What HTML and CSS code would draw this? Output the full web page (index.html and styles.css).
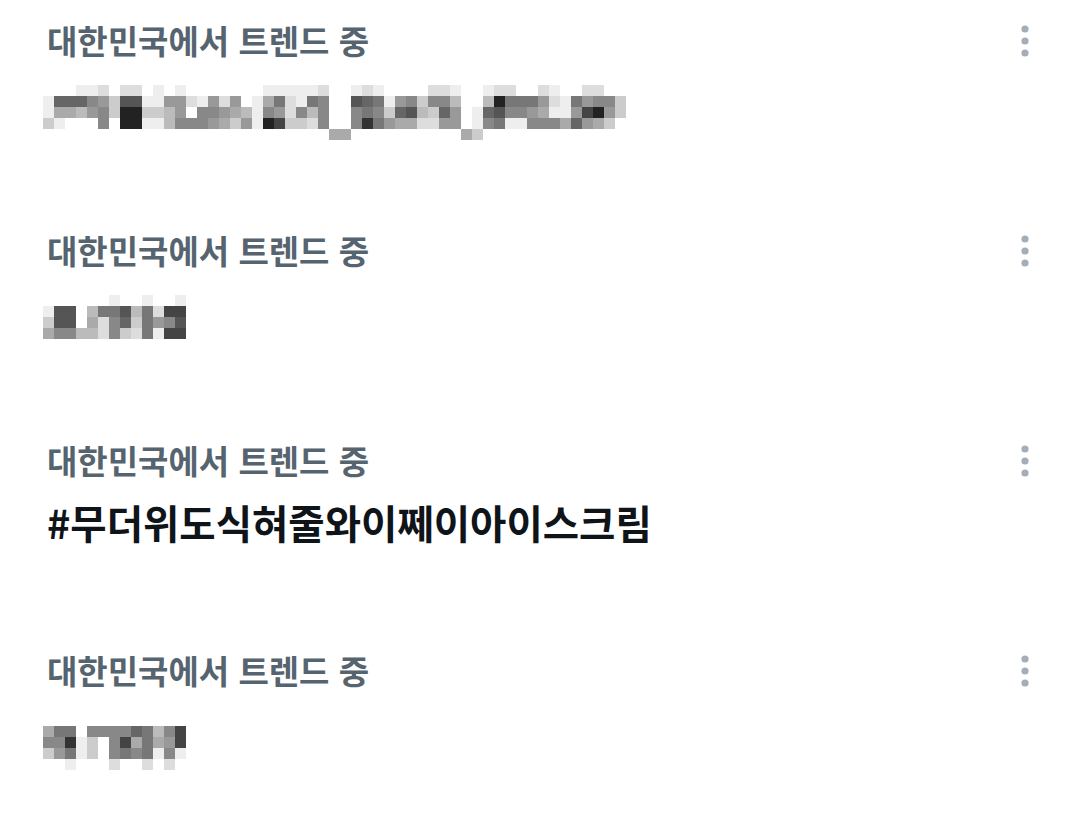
FILE: index.html
```html
<!DOCTYPE html>
<html lang="ko">
<head>
    <meta charset="UTF-8">
    <meta name="viewport" content="width=device-width, initial-scale=1.0">
    <title>트렌드</title>
    <link rel="stylesheet" href="styles.css">
</head>
<body>
    <ul class="trends">
        <li class="trend">
            <div class="trend-head">
                <span class="trend-meta">대한민국에서 트렌드 중</span>
                <button type="button" class="more" aria-label="더 보기">
                    <svg width="8" height="32" viewBox="0 0 8 32"><circle cx="4" cy="4" r="3.6"/><circle cx="4" cy="16" r="3.6"/><circle cx="4" cy="28" r="3.6"/></svg>
                </button>
            </div>
            <!-- hidden trend name, pixelated -->
            <div class="mosaic" data-rows="000eed0dd0e0e0000000eeeeed00ede0000dde00edd00de00dd00|e66689c55ee99de9d90ea7de7800567e98c88b00b27779de7988c|eaab98c22ccb90889abe89d8b800878c65bc690e65889aee9429c|ce0008022eeb8889ac9e24ccd8008379aadd990e87ee888a69ac0|00000000000000000000000000aa0000000000ac0000000000000"></div>
        </li>
        <li class="trend">
            <div class="trend-head">
                <span class="trend-meta">대한민국에서 트렌드 중</span>
                <button type="button" class="more" aria-label="더 보기">
                    <svg width="8" height="32" viewBox="0 0 8 32"><circle cx="4" cy="4" r="3.6"/><circle cx="4" cy="16" r="3.6"/><circle cx="4" cy="28" r="3.6"/></svg>
                </button>
            </div>
            <div class="mosaic" data-rows="000000e00e00e|e550b775b7d44|c550ad86c7985|a88bbd8cd7e44"></div>
        </li>
        <li class="trend">
            <div class="trend-head">
                <span class="trend-meta">대한민국에서 트렌드 중</span>
                <button type="button" class="more" aria-label="더 보기">
                    <svg width="8" height="32" viewBox="0 0 8 32"><circle cx="4" cy="4" r="3.6"/><circle cx="4" cy="16" r="3.6"/><circle cx="4" cy="28" r="3.6"/></svg>
                </button>
            </div>
            <p class="trend-name">#무더위도식혀줄와이쩨이아이스크림</p>
        </li>
        <li class="trend">
            <div class="trend-head">
                <span class="trend-meta">대한민국에서 트렌드 중</span>
                <button type="button" class="more" aria-label="더 보기">
                    <svg width="8" height="32" viewBox="0 0 8 32"><circle cx="4" cy="4" r="3.6"/><circle cx="4" cy="16" r="3.6"/><circle cx="4" cy="28" r="3.6"/></svg>
                </button>
            </div>
            <div class="mosaic" data-rows="0000000000000|a770888867b84|883ec084a7a94|c97ec08787e8e|00e000d00d0d0"></div>
        </li>
    </ul>

    <script src="script.js"></script>
</body>
</html>
```

FILE: styles.css
```css
body {
    margin: 0;
    background: #ffffff;
    font-family: "Noto Sans CJK KR", "Noto Sans", sans-serif;
}

.trends {
    list-style: none;
    margin: 0;
    padding: 0;
}

.trend {
    height: 210px;
    box-sizing: border-box;
    padding: 21px 0 0 47px;
}

.trend-head {
    display: flex;
    align-items: center;
    justify-content: space-between;
    padding-right: 51px;
}

.trend-meta {
    font-size: 33px;
    line-height: 38px;
    font-weight: 700;
    color: #56646f;
}

.more {
    border: none;
    background: none;
    padding: 0;
    margin-top: 2px;
    display: flex;
    cursor: pointer;
}

.more svg {
    fill: #a3aeb8;
}

.trend-name {
    margin: 20px 0 0;
    font-size: 39.5px;
    line-height: 46px;
    font-weight: 700;
    color: #0f1419;
}

/* blurred placeholder blocks */
.mosaic {
    display: grid;
    grid-auto-rows: 11px;
    margin: 26px 0 0 -4px;
    filter: blur(0.6px);
}

.mosaic span {
    width: 11px;
    height: 11px;
}
```

FILE: script.js
```js
document.addEventListener('DOMContentLoaded', function() {
    const blocks = document.querySelectorAll('.mosaic');

    blocks.forEach(function(block) {
        const rows = block.dataset.rows.split('|');
        block.style.gridTemplateColumns = `repeat(${rows[0].length}, 11px)`;

        rows.forEach(function(row) {
            for (const c of row) {
                const cell = document.createElement('span');
                // each char is a grey level, 0 = empty
                if (c !== '0') {
                    cell.style.background = '#' + c + c + c;
                }
                block.appendChild(cell);
            }
        });
    });
});
```
